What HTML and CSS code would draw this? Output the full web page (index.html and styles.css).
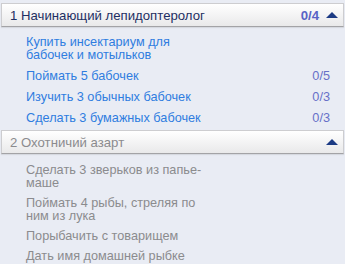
FILE: index.html
```html
<!DOCTYPE html>
<html lang="ru">
<head>
    <meta charset="UTF-8">
    <title>Достижения</title>
    <link rel="stylesheet" href="styles.css">
</head>
<body>
    <div class="quests">
        <section class="quest">
            <div class="quest-head">
                <span class="quest-title">1 Начинающий лепидоптеролог</span>
                <span class="quest-progress">0/4</span>
                <span class="arrow"></span>
            </div>
            <ul class="tasks">
                <li class="task"><span class="task-name">Купить инсектариум для бабочек и мотыльков</span></li>
                <li class="task"><span class="task-name">Поймать 5 бабочек</span><span class="task-count">0/5</span></li>
                <li class="task"><span class="task-name">Изучить 3 обычных бабочек</span><span class="task-count">0/3</span></li>
                <li class="task"><span class="task-name">Сделать 3 бумажных бабочек</span><span class="task-count">0/3</span></li>
            </ul>
        </section>

        <section class="quest locked">
            <div class="quest-head">
                <span class="quest-title">2 Охотничий азарт</span>
                <span class="arrow"></span>
            </div>
            <ul class="tasks">
                <li class="task"><span class="task-name">Сделать 3 зверьков из папье-маше</span></li>
                <li class="task"><span class="task-name">Поймать 4 рыбы, стреляя по ним из лука</span></li>
                <li class="task"><span class="task-name">Порыбачить с товарищем</span></li>
                <li class="task"><span class="task-name">Дать имя домашней рыбке</span></li>
            </ul>
        </section>
    </div>
</body>
</html>
```

FILE: styles.css
```css
:root {
    --bg: #e9ecf4;
    --head-top: #ffffff;
    --head-bottom: #e9e9ea;
    --head-border: #cdcdd0;
    --title: #1e2f63;
    --progress: #5963c6;
    --arrow: #1c3b84;
    --task: #2f7de0;
    --count: #6770c8;
    --muted: #8b8b8e;
}

* {
    margin: 0;
    padding: 0;
    box-sizing: border-box;
}

body {
    font-family: 'Liberation Sans', Arial, sans-serif;
    background: var(--bg);
    overflow: hidden;
}

.quests {
    padding-top: 3px;
}

.quest-head {
    display: flex;
    align-items: center;
    height: 24px;
    margin: 0 1px;
    padding: 0 5px 0 8px;
    background: linear-gradient(var(--head-top), var(--head-bottom));
    border: 1px solid var(--head-border);
    border-bottom-color: #a3a3a6;
    box-shadow: 0 1px 1px rgba(0, 0, 0, 0.08);
}

.quest-title {
    flex: 1;
    font-size: 13.2px;
    color: var(--title);
}

.quest-progress {
    font-size: 13.2px;
    font-weight: bold;
    color: var(--progress);
    margin-right: 7px;
}

.arrow {
    width: 0;
    height: 0;
    border-left: 6px solid transparent;
    border-right: 6px solid transparent;
    border-bottom: 6px solid var(--arrow);
}

.tasks {
    list-style: none;
    padding: 9px 15px 5px 26px;
}

.task {
    display: flex;
    justify-content: space-between;
    font-size: 12.7px;
    line-height: 13px;
    color: var(--task);
}

.task + .task {
    margin-top: 8px;
}

.task-name {
    max-width: 186px;
}

.task-count {
    color: var(--count);
}

.locked .quest-title,
.locked .task {
    color: var(--muted);
}

.locked .tasks {
    padding-top: 10px;
}

.locked .task + .task {
    margin-top: 7px;
}
```
